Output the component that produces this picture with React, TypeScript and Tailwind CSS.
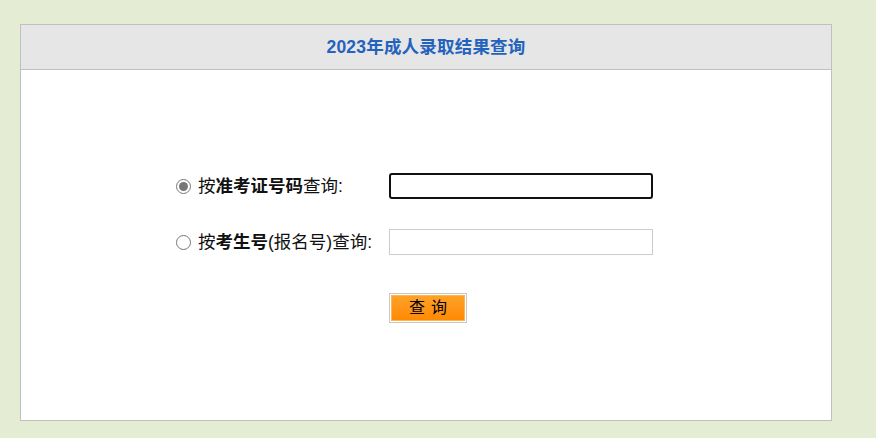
import React, { useState } from "react";

const App: React.FC = () => {
    const [mode, setMode] = useState<"zkz" | "ksh">("zkz");

    return (
        <div
            className="min-h-screen w-full bg-[#e4ecd4] pt-6 pl-5"
            style={{ fontFamily: '"Liberation Sans", "Noto Sans CJK SC", sans-serif' }}
        >
            <div className="w-[812px] h-[397px] border border-[#c0c0c0] bg-white">
                <div className="flex h-[45px] items-center justify-center border-b border-[#c0c0c0] bg-[#e6e6e6]">
                    <h1 className="text-[17.5px] font-bold tracking-[0.2px] text-[#2463bd]">
                        2023年成人录取结果查询
                    </h1>
                </div>

                <div className="pl-[155px] pt-[103px]">
                    <div className="flex h-[26px] items-center">
                        <label className="flex w-[213px] items-center text-[17.5px] text-[#111]">
                            <input
                                type="radio"
                                name="mode"
                                checked={mode === "zkz"}
                                onChange={() => setMode("zkz")}
                                className="mr-[7px] h-[15px] w-[15px] accent-[#777]"
                            />
                            按<b>准考证号码</b>查询:
                        </label>
                        <input
                            type="text"
                            autoFocus
                            className="h-[26px] w-[264px] rounded-[3px] border-2 border-[#111] px-2 outline-none"
                        />
                    </div>

                    <div className="mt-[30px] flex h-[26px] items-center">
                        <label className="flex w-[213px] items-center text-[17.5px] text-[#111]">
                            <input
                                type="radio"
                                name="mode"
                                checked={mode === "ksh"}
                                onChange={() => setMode("ksh")}
                                className="mr-[7px] h-[15px] w-[15px] accent-[#777]"
                            />
                            按<b>考生号</b>(报名号)查询:
                        </label>
                        <input
                            type="text"
                            className="h-[26px] w-[264px] border border-[#cccccc] px-2 outline-none"
                        />
                    </div>

                    <div className="mt-[38px] pl-[213px]">
                        <button className="h-[30px] w-[78px] border border-[#c8c8c8] bg-white p-[1px]">
                            <span className="flex h-full w-full items-center justify-center border border-[#ffb54a] bg-gradient-to-b from-[#ffa125] to-[#ff8a00] pl-[6px] text-[16px] tracking-[6px] text-black">
                                查询
                            </span>
                        </button>
                    </div>
                </div>
            </div>
        </div>
    );
};

export default App;
